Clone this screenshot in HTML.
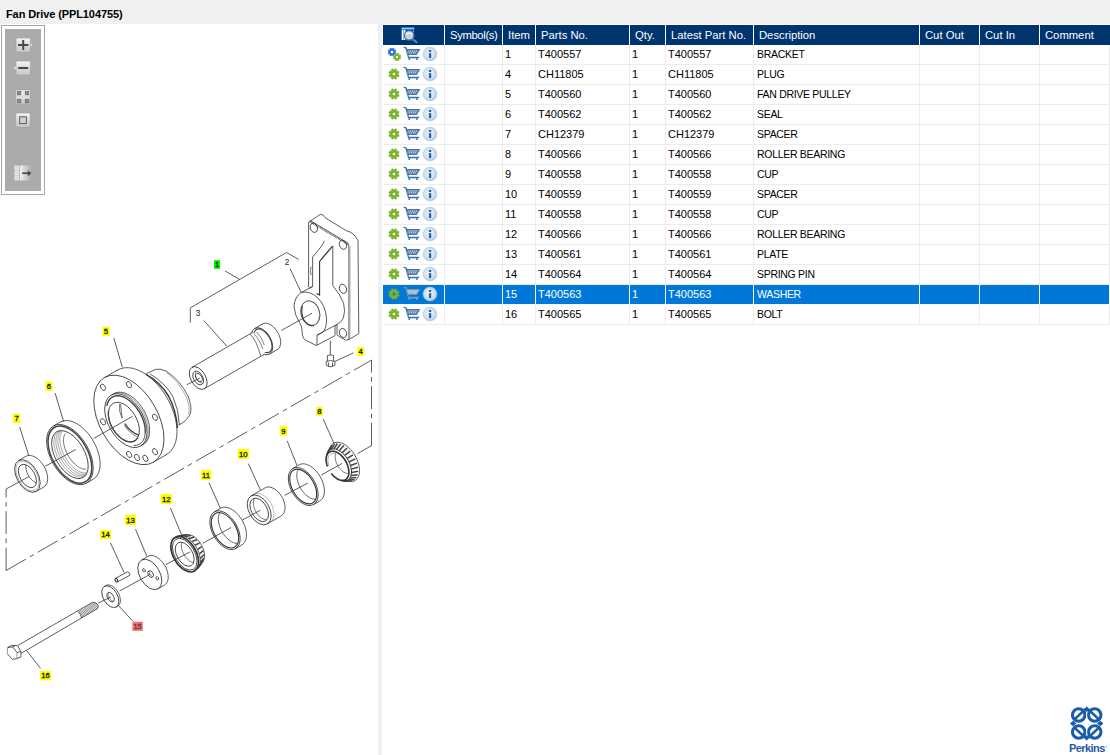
<!DOCTYPE html>
<html>
<head>
<meta charset="utf-8">
<title>Fan Drive</title>
<style>
*{box-sizing:border-box;margin:0;padding:0}
html,body{width:1110px;height:755px;overflow:hidden;background:#f0f0f0;font-family:"Liberation Sans",sans-serif;color:#000}
#title{position:absolute;left:6px;top:7px;font-size:11px;font-weight:bold;line-height:14px;white-space:nowrap;letter-spacing:-0.1px}
#left{position:absolute;left:0;top:24px;width:378px;height:731px;background:#fff;overflow:hidden}
#right{position:absolute;left:382px;top:24px;width:728px;height:731px;background:#fff;overflow:hidden}
#tb{position:absolute;left:1px;top:1px;width:44px;height:170px;border:1px solid #a6a6a6;background:#fff;padding:3px}
#tb .in{width:36px;height:162px;background:#ababab;position:relative}
.btn{position:absolute;left:11px;width:14px;height:14px;border-radius:1px;background:linear-gradient(#efefef,#d0d0d0);box-shadow:0 0 0 1px rgba(120,120,120,.35)}
#grid{position:absolute;left:1px;top:1px;width:727px;border-collapse:separate;border-spacing:0;table-layout:fixed;font-size:11px}
#grid th{height:20px;background:#00346e;color:#fff;font-weight:normal;text-align:left;padding:0 0 0 5px;border-right:1px solid #fff;white-space:nowrap;overflow:hidden;font-size:11.25px}
#grid td{height:20px;border-right:1px solid #ececec;border-bottom:1px solid #ececec;padding:0 0 2px 2px;white-space:nowrap;overflow:hidden}
#grid tr.sel td{background:#0078d7;color:#fff;border-right-color:#f4f4f4;border-bottom-color:#f8f8f8}
#grid td:nth-child(7){font-size:10.5px;letter-spacing:-0.3px;padding-left:3px}
#grid td.i{padding:0}#grid td.i svg{display:block}
#dia{position:absolute;left:0;top:0}
#logo{position:absolute;left:1066px;top:704px}
</style>
</head>
<body>
<!--DEFS--><svg width="0" height="0" style="position:absolute"><defs><radialGradient id="ig" cx="0.45" cy="0.45" r="0.6"><stop offset="0" stop-color="#eef4fa"/><stop offset="0.6" stop-color="#d2e1ef"/><stop offset="1" stop-color="#9fc0de"/></radialGradient></defs></svg><!--/DEFS-->



<div id="title">Fan Drive (PPL104755)</div>
<div id="left">
<svg id="dia" width="378" height="731" viewBox="0 24 378 731" fill="none" stroke="#333" stroke-width="0.8" font-family="Liberation Sans, sans-serif">
<!--DIAGRAM-->
<path d="M6.1 570.5L371.5 360.1" stroke-dasharray="22.8 4.5 4.7 4.5"/>
<path d="M371.5 445.6L371.5 360.1" stroke-dasharray="22.8 4.5 4.7 4.5"/>
<path d="M6.1 570.5L6.1 489.0" stroke-dasharray="22.8 4.5 4.7 4.5"/>
<path d="M371.5 445.6L357.5 453.6" />
<path d="M6.1 489.0L29.1 476.5" />
<ellipse cx="27.4" cy="476.0" rx="10.6" ry="17.8" transform="rotate(-30 27.4 476.0)" />
<path d="M43.7 487.1 L45.0 486.2 L46.0 485.0 L46.8 483.5 L47.3 481.8 L47.6 479.9 L47.6 477.8 L47.4 475.6 L46.9 473.3 L46.2 471.0 L45.2 468.6 L44.0 466.4 L42.7 464.3 L41.1 462.3 L39.5 460.5 L37.8 458.9 L36.0 457.6 L34.1 456.6 L32.3 455.9 L30.6 455.5 L28.9 455.4 L27.3 455.7 L25.9 456.3" />
<path d="M36.3 491.4L43.7 487.1" />
<path d="M18.5 460.6L25.9 456.3" />
<ellipse cx="27.4" cy="476.0" rx="7.4" ry="12.8" transform="rotate(-30 27.4 476.0)" />
<path d="M25.9 464.9 L25.8 465.6 L25.8 466.3 L25.8 467.0 L25.9 467.8 L26.0 468.6 L26.1 469.4 L26.3 470.2 L26.5 471.0 L26.8 471.8 L27.1 472.6 L27.4 473.4 L27.8 474.2 L28.2 475.0 L28.7 475.8 L29.1 476.5 L29.6 477.3 L30.2 478.0 L30.7 478.6 L31.3 479.3 L31.9 479.9 L32.5 480.4 L33.1 481.0 L33.7 481.4 L34.4 481.9 L35.0 482.2 L35.6 482.6 L36.3 482.8" />
<ellipse cx="27.4" cy="476.0" rx="9.6" ry="16.2" transform="rotate(-30 27.4 476.0)" stroke-width="0.5" stroke="#777"/>
<ellipse cx="69.9" cy="454.6" rx="19.0" ry="33.0" transform="rotate(-30 69.9 454.6)" />
<path d="M93.3 479.2 L95.5 477.5 L97.3 475.3 L98.7 472.6 L99.6 469.5 L100.1 466.0 L100.1 462.1 L99.6 458.1 L98.7 453.8 L97.3 449.5 L95.5 445.3 L93.3 441.1 L90.8 437.1 L88.0 433.4 L84.9 430.1 L81.8 427.2 L78.5 424.7 L75.1 422.8 L71.8 421.4 L68.7 420.7 L65.6 420.5 L62.8 421.0 L60.3 422.0" />
<path d="M86.4 483.2L93.3 479.2" />
<path d="M53.4 426.0L60.3 422.0" />
<ellipse cx="69.9" cy="454.6" rx="17.7" ry="31.3" transform="rotate(-30 69.9 454.6)" stroke-width="1.5" stroke="#444"/>
<ellipse cx="69.9" cy="454.6" rx="14.6" ry="26.4" transform="rotate(-30 69.9 454.6)" />
<path d="M60.6 430.2 L59.7 430.5 L58.8 431.0 L58.0 431.5 L57.2 432.2 L56.5 433.0 L55.9 433.8 L55.4 434.8 L54.9 435.8 L54.6 437.0 L54.3 438.2 L54.1 439.5 L53.9 440.8 L53.9 442.2 L54.0 443.7 L54.1 445.2 L54.3 446.8 L54.7 448.4 L55.1 450.0 L55.5 451.6 L56.1 453.3 L56.7 454.9 L57.4 456.6 L58.2 458.2 L59.1 459.8 L60.0 461.4 L60.9 462.9 L62.0 464.4 L63.0 465.8 L64.1 467.2 L65.3 468.5 L66.5 469.8 L67.7 470.9 L68.9 472.0 L70.1 473.0 L71.4 473.8 L72.6 474.6 L73.9 475.3 L75.1 475.9 L76.3 476.4 L77.5 476.7 L78.7 477.0 L79.8 477.1 L80.9 477.1 L82.0 477.0 L83.0 476.8 L83.9 476.5 L84.8 476.0 L85.6 475.5 L86.4 474.8" stroke-width="0.6" stroke="#666"/>
<path d="M60.6 430.4 L59.8 431.0 L59.0 431.6 L58.4 432.3 L57.8 433.2 L57.2 434.1 L56.8 435.2 L56.5 436.3 L56.2 437.5 L56.0 438.7 L55.9 440.1 L55.9 441.4 L55.9 442.9 L56.1 444.4 L56.3 445.9 L56.6 447.5 L57.0 449.1 L57.5 450.7 L58.0 452.3 L58.7 453.9 L59.4 455.5 L60.1 457.1 L61.0 458.7 L61.9 460.3 L62.8 461.8 L63.8 463.2 L64.9 464.7 L66.0 466.0 L67.1 467.3 L68.2 468.5 L69.4 469.7 L70.6 470.7 L71.8 471.7 L73.0 472.6 L74.3 473.3 L75.5 474.0 L76.7 474.6 L77.9 475.1 L79.1 475.4 L80.2 475.7 L81.3 475.8 L82.4 475.8 L83.4 475.7 L84.4 475.5 L85.3 475.2 L86.2 474.8" stroke-width="0.6" stroke="#666"/>
<path d="M61.6 430.6 L60.9 431.2 L60.3 431.9 L59.7 432.7 L59.2 433.6 L58.8 434.6 L58.4 435.7 L58.2 436.9 L58.0 438.1 L57.9 439.4 L57.9 440.8 L57.9 442.2 L58.1 443.7 L58.3 445.1 L58.6 446.7 L59.0 448.2 L59.5 449.8 L60.0 451.4 L60.6 453.0 L61.3 454.5 L62.1 456.1 L62.9 457.6 L63.8 459.2 L64.7 460.6 L65.7 462.1 L66.7 463.4 L67.7 464.8 L68.8 466.0 L70.0 467.2 L71.1 468.3 L72.3 469.4 L73.5 470.3 L74.7 471.2 L75.9 471.9 L77.0 472.6 L78.2 473.2 L79.4 473.6 L80.5 474.0 L81.6 474.2 L82.7 474.3 L83.7 474.4 L84.7 474.3 L85.7 474.1 L86.6 473.8" stroke-width="0.6" stroke="#666"/>
<path d="M62.8 430.7 L62.2 431.4 L61.6 432.2 L61.1 433.1 L60.7 434.1 L60.4 435.1 L60.1 436.3 L60.0 437.5 L59.9 438.7 L59.8 440.1 L59.9 441.4 L60.1 442.9 L60.3 444.3 L60.6 445.8 L61.0 447.3 L61.5 448.9 L62.0 450.4 L62.6 452.0 L63.3 453.5 L64.0 455.0 L64.8 456.6 L65.7 458.0 L66.6 459.5 L67.5 460.9 L68.5 462.2 L69.6 463.5 L70.6 464.8 L71.7 465.9 L72.9 467.0 L74.0 468.1 L75.2 469.0 L76.3 469.8 L77.5 470.6 L78.6 471.2 L79.8 471.8 L80.9 472.2 L82.0 472.6 L83.1 472.8 L84.1 473.0 L85.2 473.0 L86.1 472.9 L87.0 472.7" stroke-width="0.6" stroke="#666"/>
<path d="M65.4 433.5 L65.0 434.1 L64.6 434.9 L64.2 435.7 L64.0 436.6 L63.7 437.6 L63.6 438.6 L63.5 439.7 L63.5 440.8 L63.6 442.0 L63.7 443.2 L63.9 444.5 L64.2 445.8 L64.5 447.1 L64.9 448.4 L65.4 449.7 L65.9 451.0 L66.5 452.4 L67.1 453.7 L67.8 455.0 L68.5 456.2 L69.3 457.5 L70.1 458.7 L71.0 459.8 L71.9 461.0 L72.8 462.0 L73.7 463.0 L74.7 464.0 L75.7 464.8 L76.7 465.6 L77.6 466.4 L78.6 467.0 L79.6 467.6 L80.6 468.0 L81.6 468.4 L82.5 468.7 L83.4 469.0 L84.3 469.1 L85.2 469.1 L86.0 469.0" stroke-width="0.7"/>
<ellipse cx="128.9" cy="419.9" rx="29.1" ry="48.9" transform="rotate(-30 128.9 419.9)" />
<path d="M165.4 455.2 L168.8 453.0 L171.7 450.0 L174.0 446.2 L175.7 441.8 L176.7 436.8 L177.0 431.4 L176.7 425.5 L175.6 419.4 L173.9 413.2 L171.6 407.0 L168.7 400.8 L165.3 394.9 L161.5 389.4 L157.2 384.2 L152.7 379.7 L147.9 375.7 L143.0 372.5 L138.1 370.1 L133.3 368.4 L128.7 367.7 L124.3 367.8 L120.2 368.8 L116.6 370.6" />
<path d="M153.3 462.2L166.3 454.7" />
<path d="M104.5 377.6L117.4 370.1" />
<path d="M145.9 374 L155.4 369.4 Q160 368.3 166 371 Q180 380 188 396 Q192.5 408 190.2 414 Q186.5 421.5 178.3 425.3" />
<path d="M166.5 372.6 Q179 381.5 186.2 397 Q190.5 408 188.6 414.5" stroke-width="0.6" stroke="#777"/>
<path d="M146.4 374.6 Q160 382 168.5 396 Q176.5 411 177.3 428" stroke-width="1.5" stroke="#3a3a3a"/>
<path d="M150.1 374 Q165 383 172.6 396 Q179 410 179.4 424.9" />
<ellipse cx="125.9" cy="420.6" rx="17.6" ry="29.4" transform="rotate(-30 125.9 420.6)" />
<path d="M140.5 446.0 L142.7 444.8 L144.6 443.0 L146.2 440.8 L147.3 438.2 L148.1 435.2 L148.4 431.8 L148.2 428.2 L147.6 424.5 L146.6 420.6 L145.2 416.7 L143.5 412.9 L141.3 409.2 L138.9 405.8 L136.3 402.6 L133.4 399.8 L130.5 397.5 L127.4 395.5 L124.4 394.1 L121.4 393.2 L118.5 392.9 L115.8 393.1 L113.4 393.9 L111.2 395.3" stroke-width="0.6" stroke="#666"/>
<path d="M140.9 445.5 L143.2 444.5 L145.3 443.0 L146.9 441.0 L148.2 438.6 L149.1 435.7 L149.6 432.5 L149.6 429.1 L149.3 425.4 L148.5 421.7 L147.3 417.8 L145.7 414.0 L143.7 410.3 L141.5 406.8 L139.0 403.5 L136.3 400.5 L133.4 397.9 L130.4 395.8 L127.4 394.1 L124.4 392.9 L121.5 392.3 L118.7 392.2 L116.2 392.6 L113.8 393.6 L111.8 395.1" />
<path d="M145.2 433.5 L145.3 430.3 L145.0 426.9 L144.2 423.3 L143.1 419.7 L141.6 416.1 L139.8 412.6 L137.6 409.3 L135.3 406.2 L132.7 403.4 L130.0 401.0 L127.2 399.0 L124.4 397.4 L121.6 396.4 L118.9 395.8 L116.3 395.8 L114.0 396.3 L111.9 397.3 L110.1 398.8 L108.6 400.8 L107.5 403.1 L106.8 405.9" stroke-width="1.4" stroke="#444"/>
<path d="M133.9 445.5 L136.5 445.3 L138.8 444.5 L140.8 443.2 L142.5 441.5 L143.8 439.2 L144.7 436.5 L145.2 433.5" stroke-width="1.0" stroke="#555"/>
<ellipse cx="123.9" cy="422.1" rx="12.9" ry="21.6" transform="rotate(-30 123.9 422.1)" />
<path d="M108.6 410.5 L108.4 412.9 L108.4 415.5 L108.8 418.2 L109.5 421.1 L110.5 423.9 L111.7 426.7 L113.3 429.4 L115.0 432.0 L116.9 434.4 L119.0 436.5 L121.1 438.3 L123.4 439.7 L125.6 440.8 L127.8 441.6 L129.9 441.9 L131.9 441.8 L133.7 441.3 L135.4 440.4 L136.7 439.1 L137.9 437.5" stroke-width="1.3" stroke="#444"/>
<path d="M119.6 404 Q118.6 412 122.2 418.2 Q121.2 411 120.6 404.2" stroke-width="0.7"/>
<path d="M124.7 423.5 Q129.5 431.5 138.8 435.2" stroke-width="1.4" stroke="#3a3a3a"/>
<path d="M124.4 425.2 Q129 433.2 137.8 437" stroke-width="0.6"/>
<ellipse cx="103.0" cy="387.3" rx="2.2" ry="3.4" transform="rotate(-30 103.0 387.3)" />
<ellipse cx="129.0" cy="384.7" rx="2.2" ry="3.4" transform="rotate(-30 129.0 384.7)" />
<ellipse cx="155.0" cy="417.3" rx="2.2" ry="3.4" transform="rotate(-30 155.0 417.3)" />
<ellipse cx="155.0" cy="451.7" rx="2.2" ry="3.4" transform="rotate(-30 155.0 451.7)" />
<ellipse cx="103.0" cy="421.8" rx="2.2" ry="3.4" transform="rotate(-30 103.0 421.8)" />
<ellipse cx="129.0" cy="454.4" rx="2.2" ry="3.4" transform="rotate(-30 129.0 454.4)" />
<ellipse cx="137.0" cy="457.5" rx="2.2" ry="3.4" transform="rotate(-30 137.0 457.5)" />
<ellipse cx="145.4" cy="458.3" rx="2.2" ry="3.4" transform="rotate(-30 145.4 458.3)" />
<path d="M276.8 349.9 L277.9 349.2 L278.8 348.4 L279.6 347.3 L280.2 345.9 L280.5 344.4 L280.7 342.7 L280.6 340.9 L280.3 339.0 L279.8 337.1 L279.1 335.2 L278.2 333.2 L277.1 331.4 L275.9 329.7 L274.6 328.1 L273.2 326.7 L271.7 325.4 L270.1 324.5 L268.6 323.8 L267.1 323.3 L265.7 323.2 L264.3 323.3 L263.1 323.7 L262.0 324.3" />
<path d="M269.5 354.1L277.5 349.5" />
<path d="M254.7 328.5L262.7 323.9" />
<ellipse cx="262.1" cy="341.3" rx="8.8" ry="14.8" transform="rotate(-30 262.1 341.3)" />
<ellipse cx="263.0" cy="340.8" rx="7.4" ry="13.0" transform="rotate(-30 263.0 340.8)" stroke-width="1.2" stroke="#444"/>
<path d="M192.0 367.3 L249.8 334 L255.2 332.6 L256.3 332.2 L257.5 332.0 L258.8 332.2 L260.2 332.6 L261.6 333.4 L263.0 334.4 L264.2 335.6 L265.4 337.0 L266.4 338.6 L267.3 340.3 L267.9 342.0 L268.4 343.7 L268.5 345.4 L268.5 347.0 L268.2 348.4 L267.6 349.6 L266.9 350.6 L266.0 351.4 L260.8 356.3 L204.4 388.7 Z" fill="#fff" stroke="none"/>
<ellipse cx="198.2" cy="378.0" rx="7.4" ry="12.4" transform="rotate(-30 198.2 378.0)" fill="#fff"/>
<path d="M192.0 367.3L249.8 334.0" />
<path d="M204.4 388.7L260.8 356.3" />
<ellipse cx="198.2" cy="378.0" rx="4.6" ry="7.4" transform="rotate(-30 198.2 378.0)" />
<ellipse cx="198.9" cy="377.6" rx="2.8" ry="4.6" transform="rotate(-30 198.9 377.6)" />
<path d="M196.0 371.3 L195.8 371.6 L195.7 371.9 L195.5 372.3 L195.5 372.7 L195.4 373.1 L195.4 373.5 L195.4 373.9 L195.4 374.4 L195.4 374.8 L195.5 375.3 L195.6 375.8 L195.7 376.2 L195.9 376.7 L196.0 377.2 L196.2 377.7 L196.4 378.1 L196.7 378.6 L196.9 379.0 L197.2 379.5 L197.5 379.9 L197.8 380.3 L198.2 380.7 L198.5 381.0 L198.8 381.4 L199.2 381.7 L199.6 382.0 L199.9 382.3 L200.3 382.5 L200.7 382.7 L201.1 382.9 L201.4 383.0 L201.8 383.2 L202.2 383.2 L202.6 383.3 L202.9 383.3" stroke-width="0.6"/>
<path d="M249.8 334 Q256.5 340 260.8 356.3" stroke-width="0.7"/>
<path d="M253.5 333.5 Q259.5 339 262.8 349" stroke-width="0.6"/>
<path d="M256.5 332 Q262 337.5 264.3 345" stroke-width="0.6"/>
<path d="M249.8 334 L252.6 331.8 M260.8 356.3 L264 354.8" stroke-width="0.7"/>
<path d="M308.6 222.3 L320.4 214.3 Q323 213.8 325.8 218.2 L346.5 230.8 Q353.5 232 358 240.5 L358.8 333.6 L348.9 339.6 L345.4 340.2 L337 335" />
<path d="M308.6 222.3 L308.6 287.2" />
<path d="M309.8 220.3 L347.8 243 L348.9 246 L348.9 339.6" />
<path d="M309.6 221.6 L348.3 244.6" stroke-width="1.6" stroke="#555" stroke-dasharray="0.8 0.7"/>
<path d="M350 246.5 L350 338.8" stroke-width="0.6" stroke="#777"/>
<path d="M324.4 241 Q323 245 312.6 257 L312.6 286.4 L308.4 288.4" />
<path d="M332.8 246 L319.6 261.4 L319.6 295 L316.5 293.5" stroke-width="1.1"/>
<path d="M331.8 246.2 L320.6 259.6" stroke-width="0.5"/>
<path d="M332.8 246 L332.8 285.6 Q340 294 343.6 303.2 Q345.6 311 343.4 318 Q341 323 335.4 325.4" />
<path d="M311.2 266.5 Q309.6 270.8 311.2 275" stroke-width="0.7"/>
<ellipse cx="313.8" cy="227.8" rx="3.5" ry="4.7" transform="rotate(-22 313.8 227.8)"/>
<ellipse cx="343" cy="244.8" rx="3.5" ry="4.7" transform="rotate(-22 343 244.8)"/>
<ellipse cx="343" cy="288.8" rx="3.5" ry="4.7" transform="rotate(-22 343 288.8)"/>
<ellipse cx="343" cy="333" rx="3.5" ry="4.7" transform="rotate(-22 343 333)"/>
<path d="M301.2 292.5 L312.6 286.6" />
<path d="M301.2 292.5 Q294.6 297 294 306 Q294.4 315 299.8 323 Q301.8 326 302 330 L302.4 335 Q303 339 306 340.4 L316.4 345.5 L335 335.6 L335 325.6" />
<path d="M301.2 292.5 Q310 290.5 318 298 Q325.4 305.5 326.5 318 Q327 328 322.5 332.5 L317.1 335" />
<path d="M317.1 335 L337 324.4 L337 334.8" />
<path d="M317.1 335 L316.9 345.2" />
<ellipse cx="310.3" cy="313.2" rx="9.3" ry="12.6" transform="rotate(-17 310.3 313.2)"/>
<path d="M302.4 306 Q300.6 313 304 320.5 Q308.5 326.5 314 325.6" stroke-width="1.3" stroke="#444"/>
<path d="M313.5 301.5 Q319 305.5 319.6 314.5 Q319.4 321 316 324.4" stroke-width="0.6" stroke="#777"/>
<path d="M330.3 340.4L330.3 355.0" />
<path d="M327.4 355.6 L327.4 361.3 M333.6 355.6 L333.6 361.3 M327.4 355.6 Q330.4 354.2 333.6 355.6" />
<path d="M326.2 361.4 Q330.5 359.8 334.9 361.4 L334.9 365.2 Q330.5 368.4 326.2 365.2 Z M328.6 362.5 L328.6 366.5 M332.5 362.5 L332.5 366.5" />
<path d="M348.7 481.3 L350.7 481.5 L352.6 481.4 L354.3 480.9 L355.8 480.0 L357.1 478.7 L358.2 477.1 L358.9 475.2 L359.4 473.0 L359.5 470.6 L359.4 468.0 L358.9 465.3 L358.1 462.5 L357.1 459.7 L355.8 457.0 L354.3 454.3 L352.6 451.9 L350.7 449.6 L348.6 447.5 L346.5 445.8 L344.4 444.4 L342.2 443.3 L340.1 442.6 L338.1 442.3 L336.1 442.4 L334.4 442.8 L332.8 443.7 L331.5 444.9 L330.5 446.5 L329.7 448.4" />
<path d="M326.4 454.8L329.7 448.4" />
<path d="M341.4 480.9L348.7 481.3" />
<path d="M343.8 481.0L349.2 481.1" stroke-width="1.5" stroke="#444"/>
<path d="M346.3 480.8L352.1 480.9" stroke-width="1.5" stroke="#444"/>
<path d="M348.5 479.7L354.6 479.7" stroke-width="1.5" stroke="#444"/>
<path d="M350.1 478.0L356.5 477.6" stroke-width="1.5" stroke="#444"/>
<path d="M351.2 475.5L357.7 474.8" stroke-width="1.5" stroke="#444"/>
<path d="M351.6 472.5L358.2 471.3" stroke-width="1.5" stroke="#444"/>
<path d="M351.4 469.1L357.9 467.3" stroke-width="1.5" stroke="#444"/>
<path d="M350.6 465.5L357.0 463.1" stroke-width="1.5" stroke="#444"/>
<path d="M349.2 461.9L355.3 458.8" stroke-width="1.5" stroke="#444"/>
<path d="M347.3 458.4L353.0 454.8" stroke-width="1.5" stroke="#444"/>
<path d="M344.9 455.2L350.3 451.1" stroke-width="1.5" stroke="#444"/>
<path d="M342.2 452.6L347.2 448.0" stroke-width="1.5" stroke="#444"/>
<path d="M339.4 450.6L343.9 445.6" stroke-width="1.5" stroke="#444"/>
<path d="M336.6 449.3L340.6 444.1" stroke-width="1.5" stroke="#444"/>
<path d="M333.9 448.8L337.4 443.5" stroke-width="1.5" stroke="#444"/>
<path d="M331.4 449.1L334.6 443.9" stroke-width="1.5" stroke="#444"/>
<path d="M329.4 450.3L332.2 445.2" stroke-width="1.5" stroke="#444"/>
<path d="M327.8 452.2L330.4 447.4" stroke-width="1.5" stroke="#444"/>
<path d="M342.4 480.9 L344.1 481.1 L345.7 481.0 L347.1 480.5 L348.4 479.8 L349.4 478.7 L350.3 477.4 L350.9 475.8 L351.3 474.0 L351.5 472.0 L351.4 469.9 L351.0 467.7 L350.4 465.4 L349.5 463.1 L348.5 460.9 L347.2 458.7 L345.8 456.7 L344.3 454.8 L342.6 453.2 L340.9 451.7 L339.1 450.6 L337.3 449.7 L335.5 449.1 L333.9 448.9 L332.3 449.0 L330.8 449.4 L329.5 450.1 L328.4 451.1 L327.5 452.4 L326.9 454.0" stroke-width="1.0"/>
<path d="M331.4 473.5 L332.8 475.2 L334.3 476.7 L335.9 477.9 L337.5 479.0 L339.1 479.7 L340.6 480.2 L342.1 480.4 L343.6 480.3 L344.9 480.0 L346.0 479.3 L347.0 478.4 L347.8 477.2 L348.4 475.8 L348.8 474.2 L348.9 472.5 L348.8 470.6 L348.5 468.6 L348.0 466.6 L347.3 464.5 L346.4 462.5 L345.3 460.5 L344.0 458.6 L342.6 456.9 L341.2 455.4 L339.6 454.0 L338.0 452.9 L336.4 452.1 L334.8 451.5 L333.3 451.2 L331.8 451.2 L330.5 451.5 L329.3 452.1 L328.3 452.9 L327.4 454.0 L326.8 455.3 L326.3 456.9 L326.1 458.6 L326.1 460.4 L326.4 462.4 L326.8 464.4 L327.5 466.5" stroke-width="1.6" stroke="#333"/>
<path d="M336.0 453.1 L335.7 453.6 L335.5 454.2 L335.4 454.8 L335.3 455.4 L335.2 456.1 L335.2 456.8 L335.2 457.5 L335.2 458.2 L335.3 459.0 L335.5 459.8 L335.7 460.5 L335.9 461.3 L336.1 462.1 L336.4 462.9 L336.8 463.7 L337.1 464.5 L337.5 465.3 L338.0 466.0 L338.4 466.8 L338.9 467.5 L339.5 468.2 L340.0 468.8 L340.6 469.4 L341.1 470.0 L341.7 470.6 L342.3 471.1 L342.9 471.6 L343.5 472.0 L344.2 472.3 L344.8 472.7 L345.4 472.9 L346.0 473.1 L346.6 473.3 L347.2 473.4 L347.7 473.5" stroke-width="0.7"/>
<path d="M335.0 453.7 L333.7 453.4 L332.5 453.4 L331.4 453.7 L330.4 454.2 L329.6 454.9 L328.9 455.9 L328.4 457.0 L328.1 458.3 L327.9 459.8 L328.0 461.4 L328.2 463.0 L328.6 464.8 L329.2 466.5" stroke-width="0.6" stroke="#777"/>
<ellipse cx="303.2" cy="486.5" rx="12.3" ry="20.8" transform="rotate(-30 303.2 486.5)" />
<path d="M319.9 500.9 L321.3 499.8 L322.5 498.4 L323.4 496.7 L324.0 494.7 L324.4 492.4 L324.4 490.0 L324.1 487.4 L323.5 484.7 L322.7 482.0 L321.5 479.3 L320.2 476.7 L318.6 474.2 L316.8 471.9 L314.9 469.8 L312.9 467.9 L310.8 466.4 L308.6 465.2 L306.5 464.4 L304.5 463.9 L302.5 463.8 L300.7 464.1 L299.1 464.8" />
<path d="M313.6 504.5L319.9 500.9" />
<path d="M292.8 468.5L299.1 464.8" />
<ellipse cx="303.2" cy="486.5" rx="11.0" ry="19.0" transform="rotate(-30 303.2 486.5)" stroke-width="1.1"/>
<path d="M298.4 469.3 L298.0 470.0 L297.6 470.7 L297.3 471.5 L297.1 472.4 L296.9 473.3 L296.8 474.3 L296.8 475.2 L296.8 476.3 L296.9 477.4 L297.0 478.4 L297.2 479.6 L297.5 480.7 L297.8 481.8 L298.2 483.0 L298.6 484.1 L299.1 485.3 L299.6 486.4 L300.2 487.5 L300.8 488.6 L301.5 489.7 L302.2 490.7 L303.0 491.7 L303.7 492.6 L304.5 493.5 L305.4 494.4 L306.2 495.1 L307.1 495.9 L308.0 496.5 L308.9 497.1 L309.7 497.7 L310.6 498.1 L311.5 498.5 L312.4 498.8 L313.2 499.1 L314.1 499.2 L314.9 499.3 L315.7 499.3" />
<ellipse cx="259.2" cy="509.9" rx="10.2" ry="16.2" transform="rotate(-30 259.2 509.9)" />
<path d="M281.2 515.9 L282.3 515.1 L283.3 513.9 L284.1 512.5 L284.6 510.9 L285.0 509.2 L285.0 507.2 L284.9 505.2 L284.5 503.1 L283.8 501.0 L283.0 498.8 L281.9 496.8 L280.6 494.9 L279.3 493.1 L277.7 491.4 L276.1 490.0 L274.4 488.9 L272.7 488.0 L271.0 487.3 L269.4 487.0 L267.8 487.0 L266.3 487.3 L265.0 487.9" />
<path d="M267.3 523.9L281.2 515.9" />
<path d="M251.1 495.9L265.0 487.9" />
<ellipse cx="259.2" cy="509.9" rx="7.8" ry="12.8" transform="rotate(-30 259.2 509.9)" />
<path d="M254.7 498.3 L254.3 498.8 L254.1 499.4 L253.8 499.9 L253.7 500.6 L253.5 501.2 L253.4 501.9 L253.4 502.6 L253.4 503.4 L253.4 504.1 L253.5 504.9 L253.6 505.7 L253.8 506.5 L254.0 507.4 L254.3 508.2 L254.6 509.0 L254.9 509.8 L255.3 510.6 L255.7 511.4 L256.1 512.2 L256.6 512.9 L257.1 513.7 L257.7 514.4 L258.2 515.0 L258.8 515.7 L259.4 516.3 L260.0 516.8 L260.6 517.3 L261.3 517.8 L261.9 518.2 L262.6 518.6 L263.2 518.9 L263.9 519.2 L264.5 519.4 L265.1 519.5 L265.8 519.6 L266.4 519.7 L267.0 519.6" stroke-width="0.7"/>
<path d="M271.5 521.2 L272.4 520.1 L273.1 518.7 L273.6 517.1 L273.9 515.3 L273.9 513.4 L273.8 511.4 L273.3 509.3 L272.7 507.3 L271.8 505.2 L270.8 503.2 L269.6 501.3 L268.2 499.5 L266.7 497.9 L265.2 496.5 L263.5 495.4 L261.9 494.5 L260.2 493.8 L258.6 493.5 L257.0 493.4 L255.5 493.6" stroke-width="0.5" stroke="#777"/>
<ellipse cx="225.0" cy="530.2" rx="12.5" ry="21.2" transform="rotate(-30 225.0 530.2)" />
<path d="M241.9 544.9 L243.4 543.8 L244.5 542.4 L245.5 540.7 L246.1 538.6 L246.4 536.3 L246.4 533.8 L246.2 531.2 L245.6 528.5 L244.7 525.7 L243.5 523.0 L242.1 520.3 L240.5 517.8 L238.7 515.4 L236.8 513.2 L234.7 511.4 L232.6 509.8 L230.4 508.6 L228.3 507.7 L226.2 507.3 L224.2 507.2 L222.4 507.5 L220.7 508.2" />
<path d="M235.6 548.6L241.9 544.9" />
<path d="M214.4 511.8L220.7 508.2" />
<ellipse cx="225.0" cy="530.2" rx="11.2" ry="19.4" transform="rotate(-30 225.0 530.2)" stroke-width="1.1"/>
<path d="M219.9 512.7 L219.5 513.4 L219.2 514.1 L218.9 515.0 L218.7 515.8 L218.5 516.8 L218.4 517.7 L218.3 518.8 L218.3 519.8 L218.4 520.9 L218.6 522.0 L218.8 523.2 L219.0 524.3 L219.4 525.5 L219.7 526.7 L220.2 527.8 L220.7 529.0 L221.2 530.2 L221.8 531.3 L222.5 532.4 L223.2 533.5 L223.9 534.5 L224.6 535.5 L225.4 536.5 L226.3 537.4 L227.1 538.3 L228.0 539.1 L228.9 539.9 L229.8 540.5 L230.7 541.2 L231.6 541.7 L232.5 542.2 L233.4 542.6 L234.3 542.9 L235.1 543.1 L236.0 543.3 L236.8 543.3 L237.6 543.3" />
<ellipse cx="184.7" cy="554.2" rx="11.4" ry="19.4" transform="rotate(-30 184.7 554.2)" stroke-width="1.7" stroke="#333"/>
<ellipse cx="184.7" cy="554.2" rx="10.0" ry="17.4" transform="rotate(-30 184.7 554.2)" />
<ellipse cx="184.7" cy="554.2" rx="7.8" ry="13.2" transform="rotate(-30 184.7 554.2)" />
<path d="M200.3 563.8 L201.5 563.2 L202.5 562.2 L203.4 561.0 L204.0 559.6 L204.4 557.9 L204.5 556.1 L204.4 554.1 L204.1 552.0 L203.6 549.9 L202.8 547.8 L201.8 545.7 L200.6 543.7 L199.3 541.8 L197.9 540.0 L196.3 538.5 L194.7 537.1 L193.0 536.1 L191.3 535.3 L189.7 534.8 L188.1 534.6 L186.7 534.7 L185.3 535.2 L184.1 535.9" />
<path d="M174.2 538.0L184.1 535.9" />
<path d="M193.5 571.4L200.3 563.8" />
<path d="M197.6 568.5L201.7 563.1" stroke-width="1.5" stroke="#444"/>
<path d="M199.4 565.9L203.2 560.9" stroke-width="1.5" stroke="#444"/>
<path d="M200.3 562.5L204.0 558.0" stroke-width="1.5" stroke="#444"/>
<path d="M200.3 558.4L204.1 554.4" stroke-width="1.5" stroke="#444"/>
<path d="M199.4 553.9L203.3 550.6" stroke-width="1.5" stroke="#444"/>
<path d="M197.7 549.4L201.7 546.7" stroke-width="1.5" stroke="#444"/>
<path d="M195.1 545.1L199.6 543.0" stroke-width="1.5" stroke="#444"/>
<path d="M192.1 541.4L196.9 539.7" stroke-width="1.5" stroke="#444"/>
<path d="M188.7 538.4L194.0 537.2" stroke-width="1.5" stroke="#444"/>
<path d="M185.1 536.4L190.9 535.5" stroke-width="1.5" stroke="#444"/>
<path d="M181.7 535.6L188.0 534.8" stroke-width="1.5" stroke="#444"/>
<path d="M178.6 535.9L185.3 535.1" stroke-width="1.5" stroke="#444"/>
<path d="M196.2 569.7 L197.5 568.8 L198.6 567.5 L199.4 565.9 L200.0 564.0 L200.3 562.0 L200.3 559.7 L200.0 557.3 L199.5 554.9 L198.7 552.4 L197.7 549.9 L196.4 547.5 L194.9 545.1 L193.3 543.0 L191.5 541.1 L189.6 539.4 L187.7 537.9 L185.8 536.8 L183.8 536.1 L181.9 535.6 L180.2 535.6 L178.5 535.8 L177.0 536.5" stroke-width="0.8"/>
<path d="M181.8 542.4 L181.6 543.1 L181.5 543.7 L181.4 544.4 L181.3 545.2 L181.3 545.9 L181.4 546.7 L181.5 547.5 L181.6 548.4 L181.8 549.2 L182.0 550.0 L182.3 550.9 L182.6 551.7 L183.0 552.6 L183.4 553.4 L183.8 554.2 L184.2 555.0 L184.7 555.8 L185.3 556.5 L185.8 557.2 L186.4 557.9 L187.0 558.6 L187.6 559.2 L188.2 559.8 L188.9 560.3 L189.5 560.8 L190.2 561.2 L190.8 561.6 L191.5 562.0 L192.1 562.2 L192.8 562.5 L193.4 562.6" stroke-width="0.7"/>
<ellipse cx="149.8" cy="574.4" rx="10.0" ry="16.6" transform="rotate(-30 149.8 574.4)" />
<path d="M164.5 585.1 L165.7 584.2 L166.6 583.1 L167.4 581.7 L167.9 580.1 L168.2 578.3 L168.2 576.3 L168.0 574.3 L167.5 572.1 L166.9 570.0 L166.0 567.8 L164.9 565.7 L163.6 563.7 L162.2 561.9 L160.6 560.2 L159.0 558.7 L157.3 557.5 L155.6 556.6 L153.9 555.9 L152.3 555.5 L150.7 555.5 L149.2 555.8 L147.9 556.3" />
<path d="M158.1 588.8L164.5 585.1" />
<path d="M141.5 560.0L147.9 556.3" />
<ellipse cx="150.6" cy="574.1" rx="2.5" ry="3.6" transform="rotate(-30 150.6 574.1)" />
<ellipse cx="144.0" cy="570.3" rx="1.2" ry="1.7" transform="rotate(-30 144.0 570.3)" />
<ellipse cx="157.3" cy="578.3" rx="1.2" ry="1.7" transform="rotate(-30 157.3 578.3)" />
<path d="M149.7 570.9 L149.6 571.0 L149.5 571.2 L149.5 571.4 L149.4 571.6 L149.4 571.8 L149.4 572.0 L149.4 572.3 L149.4 572.5 L149.4 572.7 L149.5 573.0 L149.5 573.2 L149.6 573.4 L149.7 573.7 L149.8 573.9 L149.9 574.1 L150.0 574.3 L150.1 574.6 L150.2 574.8 L150.4 575.0 L150.5 575.2 L150.7 575.4 L150.9 575.5 L151.0 575.7 L151.2 575.8 L151.4 576.0 L151.6 576.1 L151.8 576.2 L152.0 576.3 L152.2 576.4 L152.4 576.5 L152.6 576.5 L152.8 576.5 L153.0 576.6" stroke-width="0.6"/>
<path d="M115.4 578.4 L127.7 571.8 Q130.3 572.4 129.8 575.3 L117.4 581.9" />
<ellipse cx="116.4" cy="580.2" rx="1.2" ry="1.9" transform="rotate(-30 116.4 580.2)" stroke-width="1.1"/>
<ellipse cx="110.3" cy="596.7" rx="7.1" ry="11.9" transform="rotate(-30 110.3 596.7)" />
<path d="M117.8 606.1 L118.6 605.5 L119.3 604.7 L119.8 603.7 L120.2 602.6 L120.4 601.3 L120.4 599.9 L120.2 598.4 L119.9 596.9 L119.4 595.3 L118.8 593.8 L118.0 592.3 L117.1 590.8 L116.1 589.5 L115.0 588.3 L113.8 587.2 L112.6 586.4 L111.4 585.7 L110.2 585.2 L109.0 585.0 L107.9 584.9 L106.8 585.1 L105.9 585.5" />
<path d="M116.2 607.0L117.8 606.1" />
<path d="M104.3 586.4L105.9 585.5" />
<ellipse cx="110.6" cy="597.2" rx="3.1" ry="5.2" transform="rotate(-30 110.6 597.2)" />
<path d="M108.8 592.5 L108.6 592.7 L108.5 592.9 L108.4 593.2 L108.4 593.4 L108.3 593.7 L108.3 593.9 L108.3 594.2 L108.3 594.5 L108.3 594.8 L108.3 595.2 L108.4 595.5 L108.4 595.8 L108.5 596.2 L108.6 596.5 L108.8 596.8 L108.9 597.1 L109.1 597.5 L109.2 597.8 L109.4 598.1 L109.6 598.4 L109.8 598.7 L110.0 599.0 L110.3 599.3 L110.5 599.5 L110.7 599.8 L111.0 600.0 L111.2 600.2 L111.5 600.4 L111.7 600.6 L112.0 600.7 L112.3 600.8 L112.5 601.0 L112.8 601.0 L113.0 601.1 L113.3 601.1 L113.5 601.2 L113.8 601.2" stroke-width="0.6"/>
<path d="M18 645.4 L92.7 602.2 Q96.4 602 98.2 605.4 Q98.6 607.6 97 608.9 L21.2 653.3" />
<path d="M78.1 611.4 Q80.6 613.8 81.6 618.1" stroke-width="0.7"/>
<clipPath id="thr"><path d="M78.1 611.4 L92.7 602.2 L96.5 603 L98.4 606.8 L97 608.9 L81.6 618.1 Q80.6 613.8 78.1 611.4Z"/></clipPath>
<path d="M47.8 639.8 L79.8 609.4 M52.2 637.2 L84.2 606.8 M56.6 634.7 L88.6 604.3 M61.0 632.2 L93.0 601.8 M65.4 629.7 L97.4 599.3 M69.8 627.2 L101.8 596.8 M74.2 624.6 L106.2 594.2 M78.6 622.1 L110.6 591.7 M83.0 619.6 L115.0 589.2 M87.4 617.1 L119.4 586.7 M91.8 614.6 L123.8 584.2 M96.2 612.0 L128.2 581.6" stroke-width="0.7" stroke="#5a5a5a" clip-path="url(#thr)"/>
<path d="M7.4 647.6 L12.7 646.9 L16.9 652.5 M16.9 658.6 L12.4 659.4 L7.4 653.8" />
<path d="M7.4 647.6 L7.4 653.8 M16.9 652.5 L16.9 658.6" stroke="#999" stroke-width="1"/>
<path d="M7.9 647.4 L11.4 645.4 L17.5 645.6 L20.9 651.5 L16.9 652.5 M12.7 646.9 L15.4 645.5 M20.9 651.5 L20.9 657 L16.9 658.6" stroke-width="0.8"/>
<path d="M45.2 466.3L75.8 449.5" />
<path d="M93.7 438.5L132.7 416.2" />
<path d="M186.6 384.8L199.9 378.1" />
<path d="M281.3 330.5L312.0 313.3" />
<path d="M321.3 475.0L342.1 463.4" />
<path d="M284.6 495.4L307.9 483.0" />
<path d="M242.4 520.0L260.2 510.3" />
<path d="M202.8 543.3L231.1 527.5" />
<path d="M165.7 564.6L190.1 551.9" />
<path d="M119.6 591.0L150.6 574.1" />
<path d="M98.2 603.2L110.9 596.9" />
<path d="M113.8 338.0L122.3 367.2" />
<path d="M55.1 393.0L63.6 421.5" />
<path d="M19.7 427.0L28.7 455.4" />
<path d="M323.2 418.9L334.1 443.7" />
<path d="M287.2 440.8L297.0 465.6" />
<path d="M248.3 463.6L260.4 489.9" />
<path d="M208.9 482.6L220.3 508.1" />
<path d="M170.4 508.0L181.6 534.9" />
<path d="M135.5 529.3L146.7 556.0" />
<path d="M110.4 542.8L124.1 572.6" />
<path d="M118.8 605.9L132.8 621.2" />
<path d="M26.5 650.4L40.5 668.4" />
<path d="M335.0 361.4L353.5 352.8" />
<path d="M203.8 320.5L227.0 346.4" />
<path d="M290.1 268.6L301.2 292.6" />
<path d="M190.3 322.5 L190.3 307.9 L286.5 252.5 L298.6 259.4" />
<path d="M225.0 270.9L239.6 279.4" />
<rect x="214.0" y="260.1" width="6.1" height="8.7" fill="#0af20a" stroke="none"/>
<text x="217.1" y="267.1" font-size="7.4" text-anchor="middle" fill="#0a3a0a" stroke="#0a3a0a" stroke-width="0.3">1</text>
<text x="287.0" y="264.5" font-size="8.2" text-anchor="middle" fill="#333" stroke="#333" stroke-width="0.1">2</text>
<text x="198.0" y="315.5" font-size="8.2" text-anchor="middle" fill="#333" stroke="#333" stroke-width="0.1">3</text>
<rect x="357.2" y="347.0" width="7.0" height="9.0" fill="#ffff00" stroke="none"/>
<text x="360.7" y="354.3" font-size="7.7" text-anchor="middle" fill="#1a1a1a" stroke="#1a1a1a" stroke-width="0.3">4</text>
<rect x="102.5" y="326.5" width="7.0" height="9.4" fill="#ffff00" stroke="none"/>
<text x="106.0" y="334.0" font-size="7.7" text-anchor="middle" fill="#1a1a1a" stroke="#1a1a1a" stroke-width="0.3">5</text>
<rect x="45.5" y="381.5" width="7.0" height="9.4" fill="#ffff00" stroke="none"/>
<text x="49.0" y="389.0" font-size="7.7" text-anchor="middle" fill="#1a1a1a" stroke="#1a1a1a" stroke-width="0.3">6</text>
<rect x="13.1" y="414.0" width="7.0" height="9.0" fill="#ffff00" stroke="none"/>
<text x="16.6" y="421.3" font-size="7.7" text-anchor="middle" fill="#1a1a1a" stroke="#1a1a1a" stroke-width="0.3">7</text>
<rect x="316.2" y="406.8" width="6.6" height="9.0" fill="#ffff00" stroke="none"/>
<text x="319.5" y="414.1" font-size="7.7" text-anchor="middle" fill="#1a1a1a" stroke="#1a1a1a" stroke-width="0.3">8</text>
<rect x="279.8" y="426.2" width="7.4" height="9.5" fill="#ffff00" stroke="none"/>
<text x="283.5" y="433.7" font-size="7.7" text-anchor="middle" fill="#1a1a1a" stroke="#1a1a1a" stroke-width="0.3">9</text>
<rect x="237.8" y="449.0" width="11.0" height="10.0" fill="#ffff00" stroke="none"/>
<text x="243.3" y="456.8" font-size="7.7" text-anchor="middle" fill="#1a1a1a" stroke="#1a1a1a" stroke-width="0.3">10</text>
<rect x="201.0" y="469.8" width="10.2" height="10.0" fill="#ffff00" stroke="none"/>
<text x="206.1" y="477.6" font-size="7.7" text-anchor="middle" fill="#1a1a1a" stroke="#1a1a1a" stroke-width="0.3">11</text>
<rect x="160.8" y="494.0" width="11.0" height="10.0" fill="#ffff00" stroke="none"/>
<text x="166.3" y="501.8" font-size="7.7" text-anchor="middle" fill="#1a1a1a" stroke="#1a1a1a" stroke-width="0.3">12</text>
<rect x="125.0" y="515.0" width="11.0" height="10.0" fill="#ffff00" stroke="none"/>
<text x="130.5" y="522.8" font-size="7.7" text-anchor="middle" fill="#1a1a1a" stroke="#1a1a1a" stroke-width="0.3">13</text>
<rect x="100.0" y="530.0" width="11.0" height="9.0" fill="#ffff00" stroke="none"/>
<text x="105.5" y="537.3" font-size="7.7" text-anchor="middle" fill="#1a1a1a" stroke="#1a1a1a" stroke-width="0.3">14</text>
<rect x="132.3" y="621.7" width="10.5" height="9.2" fill="#f07878" stroke="none"/>
<text x="137.6" y="629.0" font-size="7.5" text-anchor="middle" fill="#7a3030" stroke="#7a3030" stroke-width="0.3">15</text>
<rect x="40.0" y="670.8" width="11.2" height="9.5" fill="#ffff00" stroke="none"/>
<text x="45.6" y="678.3" font-size="7.7" text-anchor="middle" fill="#1a1a1a" stroke="#1a1a1a" stroke-width="0.3">16</text>
<!--/DIAGRAM-->
</svg>
<div id="tb"><div class="in">
<!--TOOLBAR--><svg width="36" height="162" viewBox="5 29 36 162" style="position:absolute;left:0;top:0">
<defs><linearGradient id="bg1" x1="0" y1="0" x2="0" y2="1"><stop offset="0" stop-color="#f4f4f4"/><stop offset="0.5" stop-color="#dcdcdc"/><stop offset="1" stop-color="#c6c6c6"/></linearGradient>
<linearGradient id="bg2" x1="0" y1="0" x2="1" y2="0"><stop offset="0" stop-color="#f2f2f2"/><stop offset="1" stop-color="#ababab"/></linearGradient></defs>
<g stroke="#9a9a9a" stroke-width="0.6">
<path d="M30.2 42.8L32.6 45 30.2 47.2Z" fill="#e6e6e6" stroke="none"/>
<rect x="16" y="38" width="14.4" height="14.2" rx="1" fill="url(#bg1)"/>
<path d="M16 65.8L13.4 68 16 70.2Z" fill="#e6e6e6" stroke="none"/>
<rect x="16" y="61" width="14.4" height="14.2" rx="1" fill="url(#bg1)"/>
<rect x="15.8" y="90" width="14.4" height="14.2" rx="1" fill="url(#bg1)"/>
<rect x="15.8" y="113" width="14.4" height="14.2" rx="1" fill="url(#bg1)"/>
</g>
<path d="M18 45H28.4M23.2 39.9V50.1" stroke="#4a4a4a" stroke-width="2"/>
<path d="M18.2 68H28.2" stroke="#4a4a4a" stroke-width="2.1"/>
<g fill="#8c8c8c" stroke="#6e6e6e" stroke-width="0.8"><rect x="17.4" y="91.4" width="3.4" height="3.4"/><rect x="25.3" y="91.4" width="3.4" height="3.4"/><rect x="17.4" y="99.4" width="3.4" height="3.4"/><rect x="25.3" y="99.4" width="3.4" height="3.4"/></g>
<rect x="19.6" y="116.8" width="6.8" height="6.8" fill="#cfcfcf" stroke="#5c5c5c" stroke-width="1"/>
<rect x="20" y="165.5" width="11.5" height="15" fill="url(#bg2)"/>
<g fill="#dcdcdc" stroke="#efefef" stroke-width="0.7"><rect x="14.9" y="166" width="4" height="4"/><rect x="14.9" y="171" width="4" height="4"/><rect x="14.9" y="176" width="4" height="4"/></g>
<path d="M22.2 173.2H28.6" stroke="#484848" stroke-width="1.6"/><path d="M27.8 170.2L31.4 173.2 27.8 176.2Z" fill="#484848"/>
</svg><!--/TOOLBAR-->
</div></div>
</div>
<div id="right">
<table id="grid">
<colgroup><col style="width:62px"><col style="width:58px"><col style="width:33px"><col style="width:94px"><col style="width:36px"><col style="width:88px"><col style="width:166px"><col style="width:60px"><col style="width:60px"><col style="width:70px"></colgroup>
<tr><th style="position:relative"><svg width="18" height="18" viewBox="400 26 18 18" style="position:absolute;left:17px;top:1px"><rect x="401.2" y="27.3" width="13.2" height="13" fill="#0d4f98"/><rect x="401.7" y="29.6" width="3.7" height="10.4" fill="#fff"/><rect x="401.2" y="27.3" width="13.2" height="2.4" fill="#2a86d6"/><path d="M401.9 28.4H413.8" stroke="#e6f1fb" stroke-width="0.7"/><path d="M403.6 30.6V39.4" stroke="#2a5a96" stroke-width="1.1" stroke-dasharray="0.9 1.1"/><path d="M412.6 31.2l1.2-0.9v1.5z" fill="#fff"/><path d="M412.6 39.2L416.6 42.3" stroke="#4f8fd4" stroke-width="2" stroke-linecap="round"/><circle cx="409.2" cy="35.4" r="4.7" fill="#d0d1d4" stroke="#2a72bd" stroke-width="1.2"/><path d="M406.2 34.4Q409 32 411.8 34.2" stroke="#f4f4f4" stroke-width="1.3" fill="none"/></svg></th><th style="letter-spacing:-0.35px">Symbol(s)</th><th>Item</th><th>Parts No.</th><th>Qty.</th><th>Latest Part No.</th><th>Description</th><th>Cut Out</th><th>Cut In</th><th style="border-right:0">Comment</th></tr>
<!--ROWS-->
<tr><td class="i"><svg class="ic" width="61" height="19" viewBox="0 0 61 19"><g><path d="M11.98 7.33 L13.01 7.83 L12.43 9.25 L11.34 8.88 L10.88 9.34 L11.25 10.43 L9.83 11.01 L9.33 9.98 L8.67 9.98 L8.17 11.01 L6.75 10.43 L7.12 9.34 L6.66 8.88 L5.57 9.25 L4.99 7.83 L6.02 7.33 L6.02 6.67 L4.99 6.17 L5.57 4.75 L6.66 5.12 L7.12 4.66 L6.75 3.57 L8.17 2.99 L8.67 4.02 L9.33 4.02 L9.83 2.99 L11.25 3.57 L10.88 4.66 L11.34 5.12 L12.43 4.75 L13.01 6.17 L11.98 6.67Z" fill="#2f6be0" stroke="#2f6be0" stroke-width="0.5" stroke-linejoin="round"/><circle cx="9" cy="7" r="1.3" fill="#fff"/><path d="M16.88 12.32 L17.82 12.79 L17.26 14.14 L16.26 13.81 L15.81 14.26 L16.14 15.26 L14.79 15.82 L14.32 14.88 L13.68 14.88 L13.21 15.82 L11.86 15.26 L12.19 14.26 L11.74 13.81 L10.74 14.14 L10.18 12.79 L11.12 12.32 L11.12 11.68 L10.18 11.21 L10.74 9.86 L11.74 10.19 L12.19 9.74 L11.86 8.74 L13.21 8.18 L13.68 9.12 L14.32 9.12 L14.79 8.18 L16.14 8.74 L15.81 9.74 L16.26 10.19 L17.26 9.86 L17.82 11.21 L16.88 11.68Z" fill="#7ab32e" stroke="#7ab32e" stroke-width="0.5" stroke-linejoin="round"/><circle cx="14" cy="12" r="1.2" fill="#fff"/></g><g fill="none" stroke="#41699b" stroke-linecap="round" stroke-linejoin="round"><path d="M21.2 2.4 L22.9 2.9 L23.9 5" stroke-width="1.3"/><path d="M23.5 4.5 H36.7 L33.7 9.5 H24.8 Z" fill="#5f83b3" stroke-width="0.9"/><path d="M25.3 6H35.2M25.9 7.8H34.2" stroke="#f2f6fb" stroke-width="0.9" stroke-dasharray="1.05 0.95" stroke-linecap="butt"/><path d="M24.8 9.5 L25.4 12.3 H35.7" stroke-width="1.2"/><path d="M26.4 13.2H34.6" stroke="#3aa0ee" stroke-width="0.6"/><path d="M26.2 14h0.1M33.9 14h0.1" stroke="#2f78c8" stroke-width="1.9"/></g><g><circle cx="47" cy="9" r="6.9" fill="url(#ig)" stroke="#b3cde6" stroke-width="0.6"/><rect x="45.9" y="5" width="2.3" height="2" fill="#2f62a3"/><rect x="45.9" y="8.1" width="2.3" height="4.9" fill="#2f62a3"/></g></svg></td><td></td><td>1</td><td>T400557</td><td>1</td><td>T400557</td><td>BRACKET</td><td></td><td></td><td class="l"></td></tr>
<tr><td class="i"><svg class="ic" width="61" height="19" viewBox="0 0 61 19"><g><path d="M14.88 9.43 L16.19 10.07 L15.43 11.91 L14.04 11.44 L13.44 12.04 L13.91 13.43 L12.07 14.19 L11.43 12.88 L10.57 12.88 L9.93 14.19 L8.09 13.43 L8.56 12.04 L7.96 11.44 L6.57 11.91 L5.81 10.07 L7.12 9.43 L7.12 8.57 L5.81 7.93 L6.57 6.09 L7.96 6.56 L8.56 5.96 L8.09 4.57 L9.93 3.81 L10.57 5.12 L11.43 5.12 L12.07 3.81 L13.91 4.57 L13.44 5.96 L14.04 6.56 L15.43 6.09 L16.19 7.93 L14.88 8.57ZM12.60 9a1.6 1.6 0 1 0 -3.2 0a1.6 1.6 0 1 0 3.2 0Z" fill="#7ab32e" fill-rule="evenodd" stroke="#7ab32e" stroke-width="0.6" stroke-linejoin="round"/></g><g fill="none" stroke="#41699b" stroke-linecap="round" stroke-linejoin="round"><path d="M21.2 2.4 L22.9 2.9 L23.9 5" stroke-width="1.3"/><path d="M23.5 4.5 H36.7 L33.7 9.5 H24.8 Z" fill="#5f83b3" stroke-width="0.9"/><path d="M25.3 6H35.2M25.9 7.8H34.2" stroke="#f2f6fb" stroke-width="0.9" stroke-dasharray="1.05 0.95" stroke-linecap="butt"/><path d="M24.8 9.5 L25.4 12.3 H35.7" stroke-width="1.2"/><path d="M26.4 13.2H34.6" stroke="#3aa0ee" stroke-width="0.6"/><path d="M26.2 14h0.1M33.9 14h0.1" stroke="#2f78c8" stroke-width="1.9"/></g><g><circle cx="47" cy="9" r="6.9" fill="url(#ig)" stroke="#b3cde6" stroke-width="0.6"/><rect x="45.9" y="5" width="2.3" height="2" fill="#2f62a3"/><rect x="45.9" y="8.1" width="2.3" height="4.9" fill="#2f62a3"/></g></svg></td><td></td><td>4</td><td>CH11805</td><td>1</td><td>CH11805</td><td>PLUG</td><td></td><td></td><td class="l"></td></tr>
<tr><td class="i"><svg class="ic" width="61" height="19" viewBox="0 0 61 19"><g><path d="M14.88 9.43 L16.19 10.07 L15.43 11.91 L14.04 11.44 L13.44 12.04 L13.91 13.43 L12.07 14.19 L11.43 12.88 L10.57 12.88 L9.93 14.19 L8.09 13.43 L8.56 12.04 L7.96 11.44 L6.57 11.91 L5.81 10.07 L7.12 9.43 L7.12 8.57 L5.81 7.93 L6.57 6.09 L7.96 6.56 L8.56 5.96 L8.09 4.57 L9.93 3.81 L10.57 5.12 L11.43 5.12 L12.07 3.81 L13.91 4.57 L13.44 5.96 L14.04 6.56 L15.43 6.09 L16.19 7.93 L14.88 8.57ZM12.60 9a1.6 1.6 0 1 0 -3.2 0a1.6 1.6 0 1 0 3.2 0Z" fill="#7ab32e" fill-rule="evenodd" stroke="#7ab32e" stroke-width="0.6" stroke-linejoin="round"/></g><g fill="none" stroke="#41699b" stroke-linecap="round" stroke-linejoin="round"><path d="M21.2 2.4 L22.9 2.9 L23.9 5" stroke-width="1.3"/><path d="M23.5 4.5 H36.7 L33.7 9.5 H24.8 Z" fill="#5f83b3" stroke-width="0.9"/><path d="M25.3 6H35.2M25.9 7.8H34.2" stroke="#f2f6fb" stroke-width="0.9" stroke-dasharray="1.05 0.95" stroke-linecap="butt"/><path d="M24.8 9.5 L25.4 12.3 H35.7" stroke-width="1.2"/><path d="M26.4 13.2H34.6" stroke="#3aa0ee" stroke-width="0.6"/><path d="M26.2 14h0.1M33.9 14h0.1" stroke="#2f78c8" stroke-width="1.9"/></g><g><circle cx="47" cy="9" r="6.9" fill="url(#ig)" stroke="#b3cde6" stroke-width="0.6"/><rect x="45.9" y="5" width="2.3" height="2" fill="#2f62a3"/><rect x="45.9" y="8.1" width="2.3" height="4.9" fill="#2f62a3"/></g></svg></td><td></td><td>5</td><td>T400560</td><td>1</td><td>T400560</td><td>FAN DRIVE PULLEY</td><td></td><td></td><td class="l"></td></tr>
<tr><td class="i"><svg class="ic" width="61" height="19" viewBox="0 0 61 19"><g><path d="M14.88 9.43 L16.19 10.07 L15.43 11.91 L14.04 11.44 L13.44 12.04 L13.91 13.43 L12.07 14.19 L11.43 12.88 L10.57 12.88 L9.93 14.19 L8.09 13.43 L8.56 12.04 L7.96 11.44 L6.57 11.91 L5.81 10.07 L7.12 9.43 L7.12 8.57 L5.81 7.93 L6.57 6.09 L7.96 6.56 L8.56 5.96 L8.09 4.57 L9.93 3.81 L10.57 5.12 L11.43 5.12 L12.07 3.81 L13.91 4.57 L13.44 5.96 L14.04 6.56 L15.43 6.09 L16.19 7.93 L14.88 8.57ZM12.60 9a1.6 1.6 0 1 0 -3.2 0a1.6 1.6 0 1 0 3.2 0Z" fill="#7ab32e" fill-rule="evenodd" stroke="#7ab32e" stroke-width="0.6" stroke-linejoin="round"/></g><g fill="none" stroke="#41699b" stroke-linecap="round" stroke-linejoin="round"><path d="M21.2 2.4 L22.9 2.9 L23.9 5" stroke-width="1.3"/><path d="M23.5 4.5 H36.7 L33.7 9.5 H24.8 Z" fill="#5f83b3" stroke-width="0.9"/><path d="M25.3 6H35.2M25.9 7.8H34.2" stroke="#f2f6fb" stroke-width="0.9" stroke-dasharray="1.05 0.95" stroke-linecap="butt"/><path d="M24.8 9.5 L25.4 12.3 H35.7" stroke-width="1.2"/><path d="M26.4 13.2H34.6" stroke="#3aa0ee" stroke-width="0.6"/><path d="M26.2 14h0.1M33.9 14h0.1" stroke="#2f78c8" stroke-width="1.9"/></g><g><circle cx="47" cy="9" r="6.9" fill="url(#ig)" stroke="#b3cde6" stroke-width="0.6"/><rect x="45.9" y="5" width="2.3" height="2" fill="#2f62a3"/><rect x="45.9" y="8.1" width="2.3" height="4.9" fill="#2f62a3"/></g></svg></td><td></td><td>6</td><td>T400562</td><td>1</td><td>T400562</td><td>SEAL</td><td></td><td></td><td class="l"></td></tr>
<tr><td class="i"><svg class="ic" width="61" height="19" viewBox="0 0 61 19"><g><path d="M14.88 9.43 L16.19 10.07 L15.43 11.91 L14.04 11.44 L13.44 12.04 L13.91 13.43 L12.07 14.19 L11.43 12.88 L10.57 12.88 L9.93 14.19 L8.09 13.43 L8.56 12.04 L7.96 11.44 L6.57 11.91 L5.81 10.07 L7.12 9.43 L7.12 8.57 L5.81 7.93 L6.57 6.09 L7.96 6.56 L8.56 5.96 L8.09 4.57 L9.93 3.81 L10.57 5.12 L11.43 5.12 L12.07 3.81 L13.91 4.57 L13.44 5.96 L14.04 6.56 L15.43 6.09 L16.19 7.93 L14.88 8.57ZM12.60 9a1.6 1.6 0 1 0 -3.2 0a1.6 1.6 0 1 0 3.2 0Z" fill="#7ab32e" fill-rule="evenodd" stroke="#7ab32e" stroke-width="0.6" stroke-linejoin="round"/></g><g fill="none" stroke="#41699b" stroke-linecap="round" stroke-linejoin="round"><path d="M21.2 2.4 L22.9 2.9 L23.9 5" stroke-width="1.3"/><path d="M23.5 4.5 H36.7 L33.7 9.5 H24.8 Z" fill="#5f83b3" stroke-width="0.9"/><path d="M25.3 6H35.2M25.9 7.8H34.2" stroke="#f2f6fb" stroke-width="0.9" stroke-dasharray="1.05 0.95" stroke-linecap="butt"/><path d="M24.8 9.5 L25.4 12.3 H35.7" stroke-width="1.2"/><path d="M26.4 13.2H34.6" stroke="#3aa0ee" stroke-width="0.6"/><path d="M26.2 14h0.1M33.9 14h0.1" stroke="#2f78c8" stroke-width="1.9"/></g><g><circle cx="47" cy="9" r="6.9" fill="url(#ig)" stroke="#b3cde6" stroke-width="0.6"/><rect x="45.9" y="5" width="2.3" height="2" fill="#2f62a3"/><rect x="45.9" y="8.1" width="2.3" height="4.9" fill="#2f62a3"/></g></svg></td><td></td><td>7</td><td>CH12379</td><td>1</td><td>CH12379</td><td>SPACER</td><td></td><td></td><td class="l"></td></tr>
<tr><td class="i"><svg class="ic" width="61" height="19" viewBox="0 0 61 19"><g><path d="M14.88 9.43 L16.19 10.07 L15.43 11.91 L14.04 11.44 L13.44 12.04 L13.91 13.43 L12.07 14.19 L11.43 12.88 L10.57 12.88 L9.93 14.19 L8.09 13.43 L8.56 12.04 L7.96 11.44 L6.57 11.91 L5.81 10.07 L7.12 9.43 L7.12 8.57 L5.81 7.93 L6.57 6.09 L7.96 6.56 L8.56 5.96 L8.09 4.57 L9.93 3.81 L10.57 5.12 L11.43 5.12 L12.07 3.81 L13.91 4.57 L13.44 5.96 L14.04 6.56 L15.43 6.09 L16.19 7.93 L14.88 8.57ZM12.60 9a1.6 1.6 0 1 0 -3.2 0a1.6 1.6 0 1 0 3.2 0Z" fill="#7ab32e" fill-rule="evenodd" stroke="#7ab32e" stroke-width="0.6" stroke-linejoin="round"/></g><g fill="none" stroke="#41699b" stroke-linecap="round" stroke-linejoin="round"><path d="M21.2 2.4 L22.9 2.9 L23.9 5" stroke-width="1.3"/><path d="M23.5 4.5 H36.7 L33.7 9.5 H24.8 Z" fill="#5f83b3" stroke-width="0.9"/><path d="M25.3 6H35.2M25.9 7.8H34.2" stroke="#f2f6fb" stroke-width="0.9" stroke-dasharray="1.05 0.95" stroke-linecap="butt"/><path d="M24.8 9.5 L25.4 12.3 H35.7" stroke-width="1.2"/><path d="M26.4 13.2H34.6" stroke="#3aa0ee" stroke-width="0.6"/><path d="M26.2 14h0.1M33.9 14h0.1" stroke="#2f78c8" stroke-width="1.9"/></g><g><circle cx="47" cy="9" r="6.9" fill="url(#ig)" stroke="#b3cde6" stroke-width="0.6"/><rect x="45.9" y="5" width="2.3" height="2" fill="#2f62a3"/><rect x="45.9" y="8.1" width="2.3" height="4.9" fill="#2f62a3"/></g></svg></td><td></td><td>8</td><td>T400566</td><td>1</td><td>T400566</td><td>ROLLER BEARING</td><td></td><td></td><td class="l"></td></tr>
<tr><td class="i"><svg class="ic" width="61" height="19" viewBox="0 0 61 19"><g><path d="M14.88 9.43 L16.19 10.07 L15.43 11.91 L14.04 11.44 L13.44 12.04 L13.91 13.43 L12.07 14.19 L11.43 12.88 L10.57 12.88 L9.93 14.19 L8.09 13.43 L8.56 12.04 L7.96 11.44 L6.57 11.91 L5.81 10.07 L7.12 9.43 L7.12 8.57 L5.81 7.93 L6.57 6.09 L7.96 6.56 L8.56 5.96 L8.09 4.57 L9.93 3.81 L10.57 5.12 L11.43 5.12 L12.07 3.81 L13.91 4.57 L13.44 5.96 L14.04 6.56 L15.43 6.09 L16.19 7.93 L14.88 8.57ZM12.60 9a1.6 1.6 0 1 0 -3.2 0a1.6 1.6 0 1 0 3.2 0Z" fill="#7ab32e" fill-rule="evenodd" stroke="#7ab32e" stroke-width="0.6" stroke-linejoin="round"/></g><g fill="none" stroke="#41699b" stroke-linecap="round" stroke-linejoin="round"><path d="M21.2 2.4 L22.9 2.9 L23.9 5" stroke-width="1.3"/><path d="M23.5 4.5 H36.7 L33.7 9.5 H24.8 Z" fill="#5f83b3" stroke-width="0.9"/><path d="M25.3 6H35.2M25.9 7.8H34.2" stroke="#f2f6fb" stroke-width="0.9" stroke-dasharray="1.05 0.95" stroke-linecap="butt"/><path d="M24.8 9.5 L25.4 12.3 H35.7" stroke-width="1.2"/><path d="M26.4 13.2H34.6" stroke="#3aa0ee" stroke-width="0.6"/><path d="M26.2 14h0.1M33.9 14h0.1" stroke="#2f78c8" stroke-width="1.9"/></g><g><circle cx="47" cy="9" r="6.9" fill="url(#ig)" stroke="#b3cde6" stroke-width="0.6"/><rect x="45.9" y="5" width="2.3" height="2" fill="#2f62a3"/><rect x="45.9" y="8.1" width="2.3" height="4.9" fill="#2f62a3"/></g></svg></td><td></td><td>9</td><td>T400558</td><td>1</td><td>T400558</td><td>CUP</td><td></td><td></td><td class="l"></td></tr>
<tr><td class="i"><svg class="ic" width="61" height="19" viewBox="0 0 61 19"><g><path d="M14.88 9.43 L16.19 10.07 L15.43 11.91 L14.04 11.44 L13.44 12.04 L13.91 13.43 L12.07 14.19 L11.43 12.88 L10.57 12.88 L9.93 14.19 L8.09 13.43 L8.56 12.04 L7.96 11.44 L6.57 11.91 L5.81 10.07 L7.12 9.43 L7.12 8.57 L5.81 7.93 L6.57 6.09 L7.96 6.56 L8.56 5.96 L8.09 4.57 L9.93 3.81 L10.57 5.12 L11.43 5.12 L12.07 3.81 L13.91 4.57 L13.44 5.96 L14.04 6.56 L15.43 6.09 L16.19 7.93 L14.88 8.57ZM12.60 9a1.6 1.6 0 1 0 -3.2 0a1.6 1.6 0 1 0 3.2 0Z" fill="#7ab32e" fill-rule="evenodd" stroke="#7ab32e" stroke-width="0.6" stroke-linejoin="round"/></g><g fill="none" stroke="#41699b" stroke-linecap="round" stroke-linejoin="round"><path d="M21.2 2.4 L22.9 2.9 L23.9 5" stroke-width="1.3"/><path d="M23.5 4.5 H36.7 L33.7 9.5 H24.8 Z" fill="#5f83b3" stroke-width="0.9"/><path d="M25.3 6H35.2M25.9 7.8H34.2" stroke="#f2f6fb" stroke-width="0.9" stroke-dasharray="1.05 0.95" stroke-linecap="butt"/><path d="M24.8 9.5 L25.4 12.3 H35.7" stroke-width="1.2"/><path d="M26.4 13.2H34.6" stroke="#3aa0ee" stroke-width="0.6"/><path d="M26.2 14h0.1M33.9 14h0.1" stroke="#2f78c8" stroke-width="1.9"/></g><g><circle cx="47" cy="9" r="6.9" fill="url(#ig)" stroke="#b3cde6" stroke-width="0.6"/><rect x="45.9" y="5" width="2.3" height="2" fill="#2f62a3"/><rect x="45.9" y="8.1" width="2.3" height="4.9" fill="#2f62a3"/></g></svg></td><td></td><td>10</td><td>T400559</td><td>1</td><td>T400559</td><td>SPACER</td><td></td><td></td><td class="l"></td></tr>
<tr><td class="i"><svg class="ic" width="61" height="19" viewBox="0 0 61 19"><g><path d="M14.88 9.43 L16.19 10.07 L15.43 11.91 L14.04 11.44 L13.44 12.04 L13.91 13.43 L12.07 14.19 L11.43 12.88 L10.57 12.88 L9.93 14.19 L8.09 13.43 L8.56 12.04 L7.96 11.44 L6.57 11.91 L5.81 10.07 L7.12 9.43 L7.12 8.57 L5.81 7.93 L6.57 6.09 L7.96 6.56 L8.56 5.96 L8.09 4.57 L9.93 3.81 L10.57 5.12 L11.43 5.12 L12.07 3.81 L13.91 4.57 L13.44 5.96 L14.04 6.56 L15.43 6.09 L16.19 7.93 L14.88 8.57ZM12.60 9a1.6 1.6 0 1 0 -3.2 0a1.6 1.6 0 1 0 3.2 0Z" fill="#7ab32e" fill-rule="evenodd" stroke="#7ab32e" stroke-width="0.6" stroke-linejoin="round"/></g><g fill="none" stroke="#41699b" stroke-linecap="round" stroke-linejoin="round"><path d="M21.2 2.4 L22.9 2.9 L23.9 5" stroke-width="1.3"/><path d="M23.5 4.5 H36.7 L33.7 9.5 H24.8 Z" fill="#5f83b3" stroke-width="0.9"/><path d="M25.3 6H35.2M25.9 7.8H34.2" stroke="#f2f6fb" stroke-width="0.9" stroke-dasharray="1.05 0.95" stroke-linecap="butt"/><path d="M24.8 9.5 L25.4 12.3 H35.7" stroke-width="1.2"/><path d="M26.4 13.2H34.6" stroke="#3aa0ee" stroke-width="0.6"/><path d="M26.2 14h0.1M33.9 14h0.1" stroke="#2f78c8" stroke-width="1.9"/></g><g><circle cx="47" cy="9" r="6.9" fill="url(#ig)" stroke="#b3cde6" stroke-width="0.6"/><rect x="45.9" y="5" width="2.3" height="2" fill="#2f62a3"/><rect x="45.9" y="8.1" width="2.3" height="4.9" fill="#2f62a3"/></g></svg></td><td></td><td>11</td><td>T400558</td><td>1</td><td>T400558</td><td>CUP</td><td></td><td></td><td class="l"></td></tr>
<tr><td class="i"><svg class="ic" width="61" height="19" viewBox="0 0 61 19"><g><path d="M14.88 9.43 L16.19 10.07 L15.43 11.91 L14.04 11.44 L13.44 12.04 L13.91 13.43 L12.07 14.19 L11.43 12.88 L10.57 12.88 L9.93 14.19 L8.09 13.43 L8.56 12.04 L7.96 11.44 L6.57 11.91 L5.81 10.07 L7.12 9.43 L7.12 8.57 L5.81 7.93 L6.57 6.09 L7.96 6.56 L8.56 5.96 L8.09 4.57 L9.93 3.81 L10.57 5.12 L11.43 5.12 L12.07 3.81 L13.91 4.57 L13.44 5.96 L14.04 6.56 L15.43 6.09 L16.19 7.93 L14.88 8.57ZM12.60 9a1.6 1.6 0 1 0 -3.2 0a1.6 1.6 0 1 0 3.2 0Z" fill="#7ab32e" fill-rule="evenodd" stroke="#7ab32e" stroke-width="0.6" stroke-linejoin="round"/></g><g fill="none" stroke="#41699b" stroke-linecap="round" stroke-linejoin="round"><path d="M21.2 2.4 L22.9 2.9 L23.9 5" stroke-width="1.3"/><path d="M23.5 4.5 H36.7 L33.7 9.5 H24.8 Z" fill="#5f83b3" stroke-width="0.9"/><path d="M25.3 6H35.2M25.9 7.8H34.2" stroke="#f2f6fb" stroke-width="0.9" stroke-dasharray="1.05 0.95" stroke-linecap="butt"/><path d="M24.8 9.5 L25.4 12.3 H35.7" stroke-width="1.2"/><path d="M26.4 13.2H34.6" stroke="#3aa0ee" stroke-width="0.6"/><path d="M26.2 14h0.1M33.9 14h0.1" stroke="#2f78c8" stroke-width="1.9"/></g><g><circle cx="47" cy="9" r="6.9" fill="url(#ig)" stroke="#b3cde6" stroke-width="0.6"/><rect x="45.9" y="5" width="2.3" height="2" fill="#2f62a3"/><rect x="45.9" y="8.1" width="2.3" height="4.9" fill="#2f62a3"/></g></svg></td><td></td><td>12</td><td>T400566</td><td>1</td><td>T400566</td><td>ROLLER BEARING</td><td></td><td></td><td class="l"></td></tr>
<tr><td class="i"><svg class="ic" width="61" height="19" viewBox="0 0 61 19"><g><path d="M14.88 9.43 L16.19 10.07 L15.43 11.91 L14.04 11.44 L13.44 12.04 L13.91 13.43 L12.07 14.19 L11.43 12.88 L10.57 12.88 L9.93 14.19 L8.09 13.43 L8.56 12.04 L7.96 11.44 L6.57 11.91 L5.81 10.07 L7.12 9.43 L7.12 8.57 L5.81 7.93 L6.57 6.09 L7.96 6.56 L8.56 5.96 L8.09 4.57 L9.93 3.81 L10.57 5.12 L11.43 5.12 L12.07 3.81 L13.91 4.57 L13.44 5.96 L14.04 6.56 L15.43 6.09 L16.19 7.93 L14.88 8.57ZM12.60 9a1.6 1.6 0 1 0 -3.2 0a1.6 1.6 0 1 0 3.2 0Z" fill="#7ab32e" fill-rule="evenodd" stroke="#7ab32e" stroke-width="0.6" stroke-linejoin="round"/></g><g fill="none" stroke="#41699b" stroke-linecap="round" stroke-linejoin="round"><path d="M21.2 2.4 L22.9 2.9 L23.9 5" stroke-width="1.3"/><path d="M23.5 4.5 H36.7 L33.7 9.5 H24.8 Z" fill="#5f83b3" stroke-width="0.9"/><path d="M25.3 6H35.2M25.9 7.8H34.2" stroke="#f2f6fb" stroke-width="0.9" stroke-dasharray="1.05 0.95" stroke-linecap="butt"/><path d="M24.8 9.5 L25.4 12.3 H35.7" stroke-width="1.2"/><path d="M26.4 13.2H34.6" stroke="#3aa0ee" stroke-width="0.6"/><path d="M26.2 14h0.1M33.9 14h0.1" stroke="#2f78c8" stroke-width="1.9"/></g><g><circle cx="47" cy="9" r="6.9" fill="url(#ig)" stroke="#b3cde6" stroke-width="0.6"/><rect x="45.9" y="5" width="2.3" height="2" fill="#2f62a3"/><rect x="45.9" y="8.1" width="2.3" height="4.9" fill="#2f62a3"/></g></svg></td><td></td><td>13</td><td>T400561</td><td>1</td><td>T400561</td><td>PLATE</td><td></td><td></td><td class="l"></td></tr>
<tr><td class="i"><svg class="ic" width="61" height="19" viewBox="0 0 61 19"><g><path d="M14.88 9.43 L16.19 10.07 L15.43 11.91 L14.04 11.44 L13.44 12.04 L13.91 13.43 L12.07 14.19 L11.43 12.88 L10.57 12.88 L9.93 14.19 L8.09 13.43 L8.56 12.04 L7.96 11.44 L6.57 11.91 L5.81 10.07 L7.12 9.43 L7.12 8.57 L5.81 7.93 L6.57 6.09 L7.96 6.56 L8.56 5.96 L8.09 4.57 L9.93 3.81 L10.57 5.12 L11.43 5.12 L12.07 3.81 L13.91 4.57 L13.44 5.96 L14.04 6.56 L15.43 6.09 L16.19 7.93 L14.88 8.57ZM12.60 9a1.6 1.6 0 1 0 -3.2 0a1.6 1.6 0 1 0 3.2 0Z" fill="#7ab32e" fill-rule="evenodd" stroke="#7ab32e" stroke-width="0.6" stroke-linejoin="round"/></g><g fill="none" stroke="#41699b" stroke-linecap="round" stroke-linejoin="round"><path d="M21.2 2.4 L22.9 2.9 L23.9 5" stroke-width="1.3"/><path d="M23.5 4.5 H36.7 L33.7 9.5 H24.8 Z" fill="#5f83b3" stroke-width="0.9"/><path d="M25.3 6H35.2M25.9 7.8H34.2" stroke="#f2f6fb" stroke-width="0.9" stroke-dasharray="1.05 0.95" stroke-linecap="butt"/><path d="M24.8 9.5 L25.4 12.3 H35.7" stroke-width="1.2"/><path d="M26.4 13.2H34.6" stroke="#3aa0ee" stroke-width="0.6"/><path d="M26.2 14h0.1M33.9 14h0.1" stroke="#2f78c8" stroke-width="1.9"/></g><g><circle cx="47" cy="9" r="6.9" fill="url(#ig)" stroke="#b3cde6" stroke-width="0.6"/><rect x="45.9" y="5" width="2.3" height="2" fill="#2f62a3"/><rect x="45.9" y="8.1" width="2.3" height="4.9" fill="#2f62a3"/></g></svg></td><td></td><td>14</td><td>T400564</td><td>1</td><td>T400564</td><td>SPRING PIN</td><td></td><td></td><td class="l"></td></tr>
<tr class="sel"><td class="i"><svg class="ic" width="61" height="19" viewBox="0 0 61 19"><g><path d="M14.88 9.43 L16.19 10.07 L15.43 11.91 L14.04 11.44 L13.44 12.04 L13.91 13.43 L12.07 14.19 L11.43 12.88 L10.57 12.88 L9.93 14.19 L8.09 13.43 L8.56 12.04 L7.96 11.44 L6.57 11.91 L5.81 10.07 L7.12 9.43 L7.12 8.57 L5.81 7.93 L6.57 6.09 L7.96 6.56 L8.56 5.96 L8.09 4.57 L9.93 3.81 L10.57 5.12 L11.43 5.12 L12.07 3.81 L13.91 4.57 L13.44 5.96 L14.04 6.56 L15.43 6.09 L16.19 7.93 L14.88 8.57ZM12.60 9a1.6 1.6 0 1 0 -3.2 0a1.6 1.6 0 1 0 3.2 0Z" fill="#7ab32e" fill-rule="evenodd" stroke="#7ab32e" stroke-width="0.6" stroke-linejoin="round"/></g><g fill="none" stroke="#7e93b0" stroke-linecap="round" stroke-linejoin="round"><path d="M21.2 2.4 L22.9 2.9 L23.9 5" stroke-width="1.3"/><path d="M23.5 4.5 H36.7 L33.7 9.5 H24.8 Z" fill="#9db0c8" stroke-width="0.9"/><path d="M25.3 6H35.2M25.9 7.8H34.2" stroke="#dfe6ee" stroke-width="0.9" stroke-dasharray="1.05 0.95" stroke-linecap="butt"/><path d="M24.8 9.5 L25.4 12.3 H35.7" stroke-width="1.2"/><path d="M26.4 13.2H34.6" stroke="#8fb4dc" stroke-width="0.6"/><path d="M26.2 14h0.1M33.9 14h0.1" stroke="#7e9cc0" stroke-width="1.9"/></g><g><circle cx="47" cy="9" r="6.9" fill="url(#ig)" stroke="#b3cde6" stroke-width="0.6"/><rect x="45.9" y="5" width="2.3" height="2" fill="#2f62a3"/><rect x="45.9" y="8.1" width="2.3" height="4.9" fill="#2f62a3"/></g></svg></td><td></td><td>15</td><td>T400563</td><td>1</td><td>T400563</td><td>WASHER</td><td></td><td></td><td class="l"></td></tr>
<tr><td class="i"><svg class="ic" width="61" height="19" viewBox="0 0 61 19"><g><path d="M14.88 9.43 L16.19 10.07 L15.43 11.91 L14.04 11.44 L13.44 12.04 L13.91 13.43 L12.07 14.19 L11.43 12.88 L10.57 12.88 L9.93 14.19 L8.09 13.43 L8.56 12.04 L7.96 11.44 L6.57 11.91 L5.81 10.07 L7.12 9.43 L7.12 8.57 L5.81 7.93 L6.57 6.09 L7.96 6.56 L8.56 5.96 L8.09 4.57 L9.93 3.81 L10.57 5.12 L11.43 5.12 L12.07 3.81 L13.91 4.57 L13.44 5.96 L14.04 6.56 L15.43 6.09 L16.19 7.93 L14.88 8.57ZM12.60 9a1.6 1.6 0 1 0 -3.2 0a1.6 1.6 0 1 0 3.2 0Z" fill="#7ab32e" fill-rule="evenodd" stroke="#7ab32e" stroke-width="0.6" stroke-linejoin="round"/></g><g fill="none" stroke="#41699b" stroke-linecap="round" stroke-linejoin="round"><path d="M21.2 2.4 L22.9 2.9 L23.9 5" stroke-width="1.3"/><path d="M23.5 4.5 H36.7 L33.7 9.5 H24.8 Z" fill="#5f83b3" stroke-width="0.9"/><path d="M25.3 6H35.2M25.9 7.8H34.2" stroke="#f2f6fb" stroke-width="0.9" stroke-dasharray="1.05 0.95" stroke-linecap="butt"/><path d="M24.8 9.5 L25.4 12.3 H35.7" stroke-width="1.2"/><path d="M26.4 13.2H34.6" stroke="#3aa0ee" stroke-width="0.6"/><path d="M26.2 14h0.1M33.9 14h0.1" stroke="#2f78c8" stroke-width="1.9"/></g><g><circle cx="47" cy="9" r="6.9" fill="url(#ig)" stroke="#b3cde6" stroke-width="0.6"/><rect x="45.9" y="5" width="2.3" height="2" fill="#2f62a3"/><rect x="45.9" y="8.1" width="2.3" height="4.9" fill="#2f62a3"/></g></svg></td><td></td><td>16</td><td>T400565</td><td>1</td><td>T400565</td><td>BOLT</td><td></td><td></td><td class="l"></td></tr>
<!--/ROWS-->
</table>
</div>
<svg id="logo" width="44" height="51" viewBox="1066 704 44 51">
<!--LOGO--><circle cx="1078.70" cy="715.00" r="6.25" fill="none" stroke="#1b5ba7" stroke-width="3.1"/><circle cx="1078.70" cy="732.00" r="6.25" fill="none" stroke="#1b5ba7" stroke-width="3.1"/><circle cx="1094.70" cy="715.00" r="6.25" fill="none" stroke="#1b5ba7" stroke-width="3.1"/><circle cx="1094.70" cy="732.00" r="6.25" fill="none" stroke="#1b5ba7" stroke-width="3.1"/><path d="M1074.4 719.4L1085.6 709.0" stroke="#1b5ba7" stroke-width="2.6" stroke-linecap="butt"/><path d="M1099.0 719.4L1087.8 709.0" stroke="#1b5ba7" stroke-width="2.6" stroke-linecap="butt"/><path d="M1074.4 727.6L1085.6 738.0" stroke="#1b5ba7" stroke-width="2.6" stroke-linecap="butt"/><path d="M1099.0 727.6L1087.8 738.0" stroke="#1b5ba7" stroke-width="2.6" stroke-linecap="butt"/><path d="M1070.0 723.5L1073 720.8L1076.4 723.5L1073 726.2Z M1103.4 723.5L1100.4 720.8L1097 723.5L1100.4 726.2Z M1086.7 706.3L1089.2 709.2L1086.7 712.6L1084.2 709.2Z M1086.7 740.7L1089.2 737.8L1086.7 734.4L1084.2 737.8Z" fill="#1b5ba7"/><path d="M1086.7 711.5V719.6 M1086.7 727.4V735.5" stroke="#fff" stroke-width="0.8"/><text x="1068.9" y="752.2" font-family="Liberation Sans, sans-serif" font-weight="bold" font-size="11" letter-spacing="-0.55" fill="#1b5ba7">Perkins</text><circle cx="1106.3" cy="746.6" r="0.9" fill="none" stroke="#1b5ba7" stroke-width="0.4" opacity="0.6"/><!--/LOGO-->
</svg>
</body>
</html>
